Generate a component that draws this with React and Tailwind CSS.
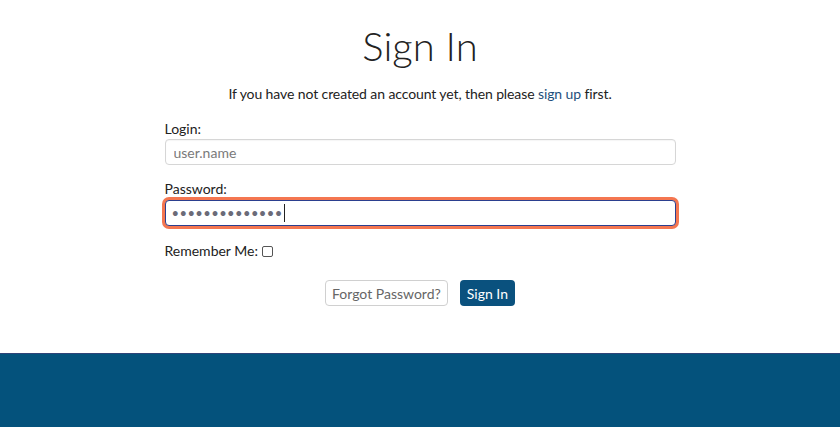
import React from 'react';

const font = { fontFamily: 'Lato, "Open Sans", sans-serif' };

export default function App() {
  return (
    <div className="flex min-h-[427px] flex-col bg-white text-[#222]" style={font}>
      <main className="flex h-[353px] flex-col items-center">
        <h1 className="mt-[24px] text-[40px] font-light leading-[44px] text-[#222]">Sign In</h1>
        <p className="mt-[16px] text-[14px] leading-[20px] tracking-[-0.1px]">
          If you have not created an account yet, then please{' '}
          <a href="#" className="text-[#1e4f7c]">sign up</a> first.
        </p>

        <form className="mt-[15px] flex w-[511px] flex-col text-[14px]">
          <label className="leading-[20px]">Login:</label>
          <input
            type="text"
            placeholder="user.name"
            className="h-[26px] w-full rounded-[4px] border border-[#d6d6d6] bg-white px-[8px] text-[14px] text-[#222] placeholder:text-[#7a7a7a] shadow-[inset_0_1px_1px_rgba(0,0,0,0.04)]"
          />

          <label className="mt-[14px] leading-[20px]">Password:</label>
          <div className="mt-[1px] flex h-[26px] items-center rounded-[4px] border border-[#2b3f8f] bg-white pl-[6px] shadow-[0_0_0_3px_#f47650]">
            <span className="text-[13px] leading-none tracking-[0.4px] text-[#6b6b78]">••••••••••••••</span>
            <span className="ml-[1px] h-[18px] w-px bg-[#222]" />
          </div>

          <div className="mt-[15px] flex items-center leading-[20px]">
            <span>Remember Me:</span>
            <span className="ml-[4px] inline-block h-[11px] w-[11px] rounded-[2px] border border-[#555] bg-white" />
          </div>

          <div className="mt-[19px] flex justify-center gap-[12px]">
            <button type="button" className="h-[26px] rounded-[4px] border border-[#d0d0d0] bg-white px-[6px] text-[14px] text-[#666]">
              Forgot Password?
            </button>
            <button type="button" className="h-[26px] rounded-[4px] bg-[#0a517e] px-[7px] text-[14px] text-white">
              Sign In
            </button>
          </div>
        </form>
      </main>
      <footer className="h-[74px] border-t border-[#2f4478] bg-[#04527c]" />
    </div>
  );
}
